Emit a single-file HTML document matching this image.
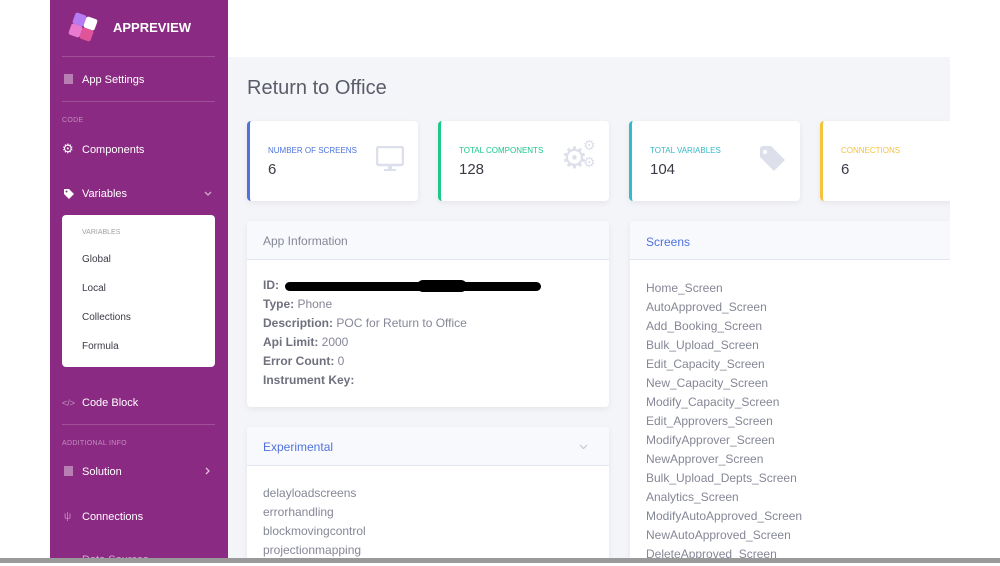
<!DOCTYPE html>
<html><head><meta charset="utf-8"><style>
*{margin:0;padding:0;box-sizing:border-box}
body{width:1000px;height:563px;overflow:hidden;background:#fff;font-family:"Liberation Sans",sans-serif;position:relative}
.a{position:absolute;white-space:nowrap}
#sb{position:absolute;left:50px;top:0;width:178px;height:558px;background:#8b2a82}
.si{color:#fff;font-size:11px}
.sh{color:rgba(255,255,255,.45);font-size:7px;letter-spacing:.3px}
.hr{position:absolute;left:12px;width:153px;height:1px;background:rgba(255,255,255,.18)}
#main{position:absolute;left:228px;top:57px;width:722px;height:501px;background:#f4f5f9;overflow:hidden}
.card{position:absolute;background:#fff;border-radius:4px;box-shadow:0 2px 6px rgba(58,59,69,.08)}
.lab{position:absolute;left:18px;top:25px;font-size:8px;text-transform:uppercase}
.val{position:absolute;left:18px;top:40px;font-size:15px;color:#3a3b45}
.hd{position:absolute;left:0;top:0;right:0;height:39px;background:#f8f9fc;border-bottom:1px solid #e3e6f0;border-radius:4px 4px 0 0}
.ln{font-size:12px;color:#858796;line-height:19px}
.ln b{color:#6e707e}
</style></head><body>
<div id="sb">
 <svg class="a" style="left:16px;top:11px" width="34" height="32" viewBox="0 0 32 30">
  <g transform="rotate(20 16 15)"><rect x="5" y="4" width="11" height="11" rx="2" fill="#b57bf2"/><rect x="16" y="4" width="11" height="11" rx="2" fill="#fff"/><rect x="5" y="15" width="11" height="11" rx="2" fill="#e87ad0"/><rect x="16" y="15" width="11" height="11" rx="2" fill="#e0549a"/></g>
 </svg>
 <div class="a" style="left:63px;top:20px;color:#fff;font-weight:bold;font-size:13px">APPREVIEW</div>
 <div class="hr" style="top:56px"></div>
 <div class="a" style="left:14px;top:74px;width:9px;height:10px;background:rgba(255,255,255,.4)"></div>
 <div class="a si" style="left:32px;top:74px">App Settings</div>
 <div class="hr" style="top:101px"></div>
 <div class="a sh" style="left:12px;top:117px">CODE</div>
 <div class="a si" style="left:12px;top:141px;font-size:13px">⚙</div>
 <div class="a si" style="left:32px;top:144px">Components</div>
 <svg class="a" style="left:13px;top:188px" width="12" height="12" viewBox="0 0 12 12"><path d="M1 1h5l5 5-5 5-5-5z" fill="#fff"/><circle cx="3.5" cy="3.5" r="1" fill="#8b2a82"/></svg>
 <div class="a si" style="left:32px;top:188px">Variables</div>
 <svg class="a" style="left:154px;top:191px" width="8" height="6"><path d="M1 1l3 3 3-3" stroke="rgba(255,255,255,.6)" fill="none" stroke-width="1.3"/></svg>
 <div class="a" style="left:12px;top:215px;width:153px;height:152px;background:#fff;border-radius:4px">
  <div class="a" style="left:20px;top:14px;font-size:7px;color:#a0a0a8">VARIABLES</div>
  <div class="a" style="left:20px;top:39px;font-size:10px;color:#3a3b45">Global</div>
  <div class="a" style="left:20px;top:68px;font-size:10px;color:#3a3b45">Local</div>
  <div class="a" style="left:20px;top:97px;font-size:10px;color:#3a3b45">Collections</div>
  <div class="a" style="left:20px;top:126px;font-size:10px;color:#3a3b45">Formula</div>
 </div>
 <div class="a" style="left:12px;top:398px;font-size:9px;color:rgba(255,255,255,.5)">&lt;/&gt;</div>
 <div class="a si" style="left:32px;top:397px">Code Block</div>
 <div class="hr" style="top:424px"></div>
 <div class="a sh" style="left:12px;top:440px">ADDITIONAL INFO</div>
 <div class="a" style="left:14px;top:466px;width:9px;height:10px;background:rgba(255,255,255,.4)"></div>
 <div class="a si" style="left:32px;top:466px">Solution</div>
 <svg class="a" style="left:155px;top:467px" width="6" height="8"><path d="M1 1l3 3-3 3" stroke="rgba(255,255,255,.7)" fill="none" stroke-width="1.3"/></svg>
 <div class="a" style="left:14px;top:511px;font-size:10px;color:rgba(255,255,255,.45)">ψ</div>
 <div class="a si" style="left:32px;top:511px">Connections</div>
 <div class="a si" style="left:32px;top:554px;opacity:.6">Data Sources</div>
</div>
<div class="a" style="left:0;top:558px;width:1000px;height:5px;background:#9a9a9a"></div>
<div id="main">
 <div class="a" style="left:19px;top:20px;font-size:20px;color:#5a5c69">Return to Office</div>
 <div class="card" style="left:19px;top:64px;width:171px;height:80px;border-left:3px solid #4e73df"><div class="lab" style="color:#4e73df">Number of Screens</div><div class="val">6</div>
  <svg class="a" style="left:126px;top:25px" width="28" height="26" viewBox="0 0 28 26"><rect x="1" y="1" width="26" height="18" rx="2" fill="none" stroke="#dddfeb" stroke-width="2.5"/><rect x="12" y="19" width="4" height="4" fill="#dddfeb"/><rect x="8" y="23" width="12" height="2" fill="#dddfeb"/></svg></div>
 <div class="card" style="left:210px;top:64px;width:171px;height:80px;border-left:3px solid #1cc88a"><div class="lab" style="color:#1cc88a">Total Components</div><div class="val">128</div>
  <div class="a" style="left:120px;top:20px;font-size:30px;color:#dddfeb">⚙</div><div class="a" style="left:142px;top:16px;font-size:14px;color:#dddfeb">⚙</div><div class="a" style="left:142px;top:33px;font-size:14px;color:#dddfeb">⚙</div></div>
 <div class="card" style="left:401px;top:64px;width:171px;height:80px;border-left:3px solid #36b9cc"><div class="lab" style="color:#36b9cc">Total Variables</div><div class="val">104</div>
  <svg class="a" style="left:127px;top:25px" width="28" height="26" viewBox="0 0 28 26"><path d="M1 2v9l14 14 11-11L12 0H3z" fill="#dddfeb"/><circle cx="6" cy="6" r="2" fill="#fff"/></svg></div>
 <div class="card" style="left:592px;top:64px;width:171px;height:80px;border-left:3px solid #f6c23e"><div class="lab" style="color:#f6c23e">Connections</div><div class="val">6</div></div>
 <div class="card" style="left:19px;top:164px;width:362px;height:186px"><div class="hd"></div>
  <div class="a" style="left:16px;top:13px;font-size:12px;color:#858796">App Information</div>
  <div class="a ln" style="left:16px;top:55px"><b>ID:</b></div>
  <div class="a" style="left:38px;top:61px;width:256px;height:9px;background:#000;border-radius:5px"></div>
  <div class="a" style="left:170px;top:59px;width:50px;height:12px;background:#000;border-radius:6px"></div>
  <div class="a ln" style="left:16px;top:74px"><b>Type:</b> Phone<br><b>Description:</b> POC for Return to Office<br><b>Api Limit:</b> 2000<br><b>Error Count:</b> 0<br><b>Instrument Key:</b></div>
 </div>
 <div class="card" style="left:19px;top:370px;width:362px;height:150px"><div class="hd"></div>
  <div class="a" style="left:16px;top:13px;font-size:12px;color:#4e73df">Experimental</div>
  <svg class="a" style="left:332px;top:17px" width="9" height="6"><path d="M1 1l3.5 3.5L8 1" stroke="#c5c7d0" fill="none" stroke-width="1.2"/></svg>
  <div class="a ln" style="left:16px;top:57px">delayloadscreens<br>errorhandling<br>blockmovingcontrol<br>projectionmapping</div>
 </div>
 <div class="card" style="left:402px;top:164px;width:340px;height:360px"><div class="hd"></div>
  <div class="a" style="left:16px;top:14px;font-size:12px;color:#4e73df">Screens</div>
  <div class="a ln" style="left:16px;top:58px">Home_Screen<br>AutoApproved_Screen<br>Add_Booking_Screen<br>Bulk_Upload_Screen<br>Edit_Capacity_Screen<br>New_Capacity_Screen<br>Modify_Capacity_Screen<br>Edit_Approvers_Screen<br>ModifyApprover_Screen<br>NewApprover_Screen<br>Bulk_Upload_Depts_Screen<br>Analytics_Screen<br>ModifyAutoApproved_Screen<br>NewAutoApproved_Screen<br>DeleteApproved_Screen</div>
 </div>
</div>
</body></html>
